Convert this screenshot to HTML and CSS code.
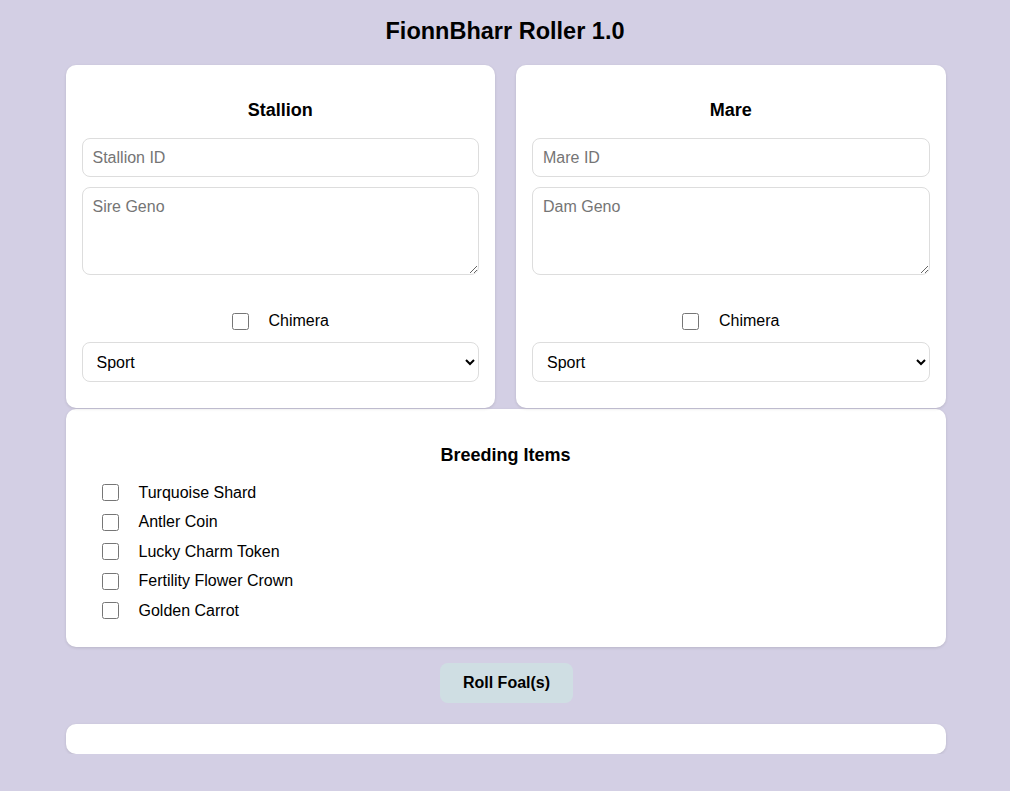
FILE: index.html
```html
<!DOCTYPE html>
<html lang="en">
<head>
    <meta charset="UTF-8">
    <meta name="viewport" content="width=device-width, initial-scale=1.0">
    <title>FionnBharr Roller 1.0</title>
    <link rel="stylesheet" href="styles.css">
</head>
<body>
    <h1 class="title">FionnBharr Roller 1.0</h1>

    <div class="container">
        <div class="parents">
            <div class="card parent">
                <h3>Stallion</h3>
                <input type="text" id="stallionId" placeholder="Stallion ID" />
                <textarea id="sireGeno" placeholder="Sire Geno"></textarea>
                <label class="chimera">
                    <input type="checkbox" id="sireChimera" />
                    <span>Chimera</span>
                </label>
                <select id="sireBreed">
                    <option>Sport</option>
                    <option>Draft</option>
                    <option>Pony</option>
                </select>
            </div>

            <div class="card parent">
                <h3>Mare</h3>
                <input type="text" id="mareId" placeholder="Mare ID" />
                <textarea id="damGeno" placeholder="Dam Geno"></textarea>
                <label class="chimera">
                    <input type="checkbox" id="damChimera" />
                    <span>Chimera</span>
                </label>
                <select id="damBreed">
                    <option>Sport</option>
                    <option>Draft</option>
                    <option>Pony</option>
                </select>
            </div>
        </div>

        <div class="card items">
            <h3>Breeding Items</h3>
            <label class="item"><input type="checkbox" /> <span>Turquoise Shard</span></label>
            <label class="item"><input type="checkbox" /> <span>Antler Coin</span></label>
            <label class="item"><input type="checkbox" /> <span>Lucky Charm Token</span></label>
            <label class="item"><input type="checkbox" /> <span>Fertility Flower Crown</span></label>
            <label class="item"><input type="checkbox" /> <span>Golden Carrot</span></label>
        </div>

        <div class="actions">
            <button id="rollBtn">Roll Foal(s)</button>
        </div>

        <div class="card output" id="output"></div>
    </div>
</body>
</html>
```

FILE: styles.css
```css
body {
    font-family: "Liberation Sans", Arial, sans-serif;
    margin: 0;
    background: #d3cfe4;
    color: #000;
}
.title {
    text-align: center;
    font-size: 23.5px;
    margin: 18px 0 20px;
}
.container {
    width: 880px;
    margin: 0 auto;
    padding-left: 1px;
}
.parents {
    display: grid;
    grid-template-columns: 1fr 1fr;
    gap: 21px;
}
.card {
    background: white;
    border-radius: 10px;
    box-shadow: 0 1px 3px rgba(0, 0, 0, 0.12);
    box-sizing: border-box;
}
.parent {
    display: flex;
    flex-direction: column;
    padding: 16px 16px 26px;
}
h3 {
    text-align: center;
    font-size: 18px;
    margin: 19px 0 17px;
}
input[type="text"], textarea, select {
    font-family: inherit;
    font-size: 16px;
    border: 1px solid #ddd;
    border-radius: 8px;
    padding: 10px;
    box-sizing: border-box;
    width: 100%;
    background: white;
    color: #000;
}
input[type="text"] {
    height: 39px;
    margin-bottom: 10px;
}
textarea {
    height: 88px;
    resize: vertical;
}
select {
    height: 40px;
    padding: 0 10px;
}
::placeholder {
    color: #757575;
}
.chimera {
    display: flex;
    justify-content: center;
    align-items: center;
    margin: 36px 0 11px;
    font-size: 16px;
    height: 20px;
}
input[type="checkbox"] {
    width: 17px;
    height: 17px;
    margin: 0 20px 0 0;
}
.items {
    margin-top: 1px;
    padding: 17px 16px 21px;
}
.items h3 {
    margin-bottom: 12px;
}
.item {
    display: flex;
    align-items: center;
    height: 29.5px;
    padding-left: 20px;
    font-size: 16px;
}
.actions {
    text-align: center;
    margin: 16px 0 21px;
    padding-left: 2px;
}
button {
    background: #cfdee3;
    color: #000;
    font-family: inherit;
    font-weight: bold;
    font-size: 16px;
    border: none;
    border-radius: 8px;
    width: 133px;
    height: 40px;
    cursor: pointer;
}
button:hover {
    background: #bfd2d9;
}
.output {
    height: 30px;
    padding: 15px;
}
```
